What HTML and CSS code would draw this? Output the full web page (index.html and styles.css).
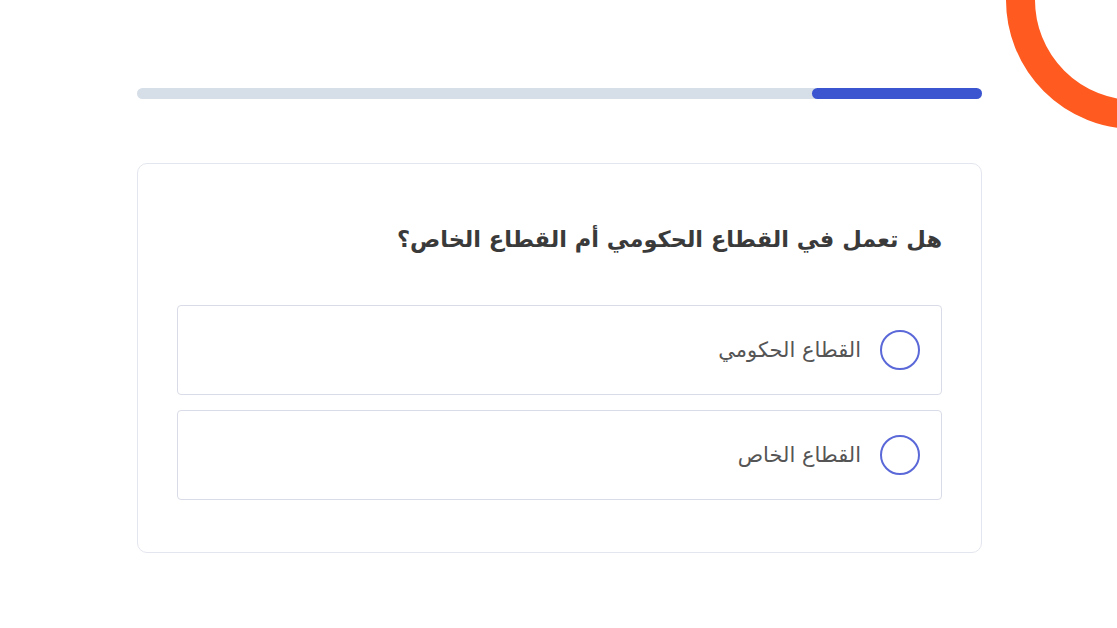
FILE: index.html
```html
<!DOCTYPE html>
<html lang="ar" dir="rtl">
<head>
    <meta charset="UTF-8">
    <meta name="viewport" content="width=device-width, initial-scale=1.0">
    <title>سؤال القطاع</title>
    <link rel="stylesheet" href="styles.css">
</head>
<body>
    <svg class="ring" width="140" height="140" viewBox="0 0 140 140">
        <circle cx="158" cy="0" r="114.5" fill="none" stroke="#ff5a1f" stroke-width="29"/>
    </svg>

    <div class="wrap">
        <div class="progress">
            <div class="progress-fill"></div>
        </div>

        <div class="card">
            <h2 class="question">هل تعمل في القطاع الحكومي أم القطاع الخاص؟</h2>
            <div class="options">
                <label class="option">
                    <span class="radio"></span>
                    <span class="option-text">القطاع الحكومي</span>
                </label>
                <label class="option">
                    <span class="radio"></span>
                    <span class="option-text">القطاع الخاص</span>
                </label>
            </div>
        </div>
    </div>
</body>
</html>
```

FILE: styles.css
```css
body {
    margin: 0;
    padding-left: 2px;
    background: #ffffff;
    font-family: "DejaVu Sans", "Noto Sans", sans-serif;
    overflow: hidden;
}

.ring {
    position: absolute;
    top: 0;
    right: 0;
}

.wrap {
    width: 845px;
    margin: 0 auto;
    padding-top: 88px;
}

.progress {
    height: 11px;
    border-radius: 6px;
    background: #d6dee8;
    display: flex;
}

.progress-fill {
    width: 170px;
    height: 100%;
    border-radius: 6px;
    background: #3b55d0;
}

.card {
    margin-top: 64px;
    border: 1.5px solid #e4e6ef;
    border-radius: 10px;
    padding: 56px 39px 52px;
}

.question {
    margin: 0;
    font-size: 22.5px;
    font-weight: bold;
    color: #3a3a3a;
    line-height: 38px;
}

.options {
    margin-top: 47px;
    display: flex;
    flex-direction: column;
    gap: 15px;
}

.option {
    height: 88px;
    border: 1px solid #d9dce8;
    border-radius: 4px;
    display: flex;
    align-items: center;
    gap: 19px;
    padding-right: 21px;
    cursor: pointer;
}

.radio {
    width: 36px;
    height: 36px;
    border: 2px solid #5a68d8;
    border-radius: 50%;
}

.option-text {
    font-size: 21px;
    color: #555555;
}
```
